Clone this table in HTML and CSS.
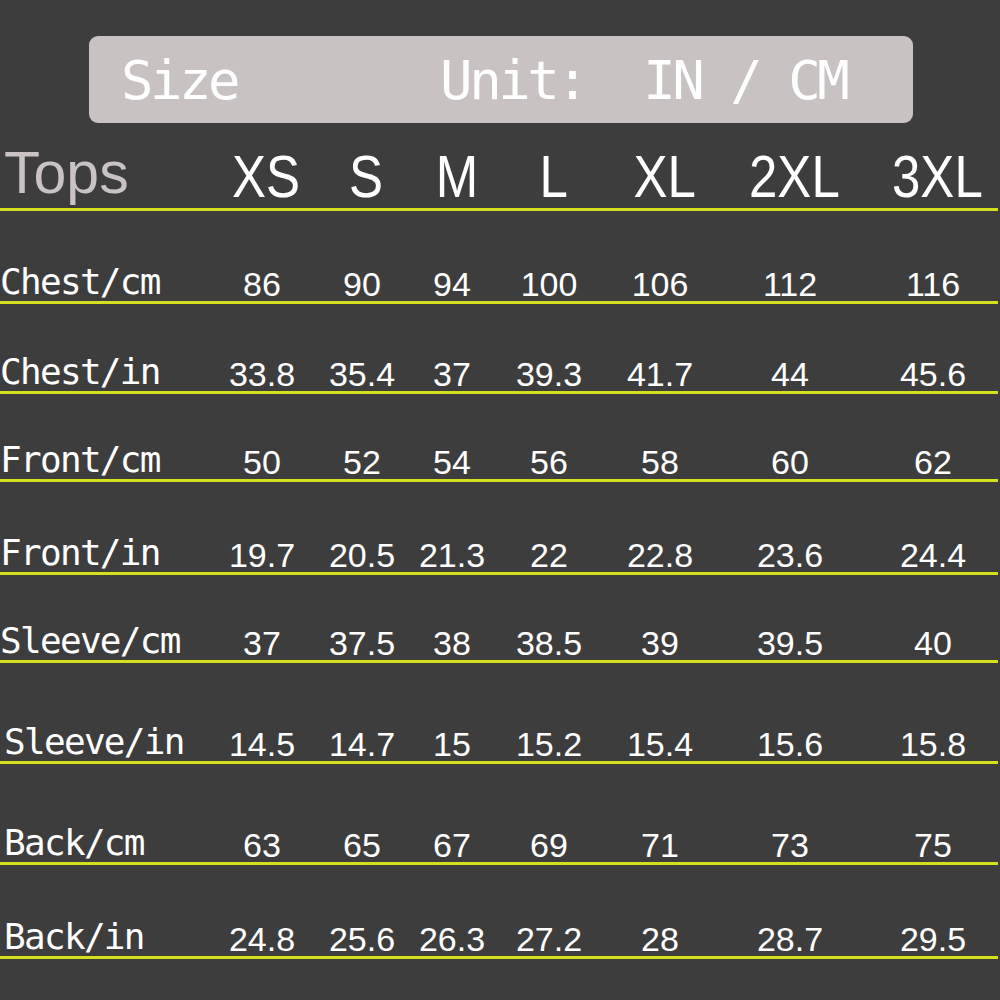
FILE: index.html
```html
<!DOCTYPE html>
<html>
<head>
<meta charset="utf-8">
<title>Size chart</title>
<link rel="stylesheet" href="styles.css">
</head>
<body>
<div class="page">
  <div class="banner"><span class="banner-text">Size       Unit:  IN / CM</span></div>
  <div class="table">
    <div class="row head">
      <div class="tops">Tops</div>
      <div class="size"><span>XS</span></div><div class="size"><span>S</span></div><div class="size"><span>M</span></div><div class="size"><span>L</span></div><div class="size"><span>XL</span></div><div class="size"><span>2XL</span></div><div class="size"><span>3XL</span></div>
    </div>
    <div class="row h93">
      <div class="label">Chest/cm</div>
      <div class="cell">86</div><div class="cell">90</div><div class="cell">94</div><div class="cell">100</div><div class="cell">106</div><div class="cell">112</div><div class="cell">116</div>
    </div>
    <div class="row h90">
      <div class="label">Chest/in</div>
      <div class="cell">33.8</div><div class="cell">35.4</div><div class="cell">37</div><div class="cell">39.3</div><div class="cell">41.7</div><div class="cell">44</div><div class="cell">45.6</div>
    </div>
    <div class="row h88">
      <div class="label">Front/cm</div>
      <div class="cell">50</div><div class="cell">52</div><div class="cell">54</div><div class="cell">56</div><div class="cell">58</div><div class="cell">60</div><div class="cell">62</div>
    </div>
    <div class="row h93">
      <div class="label">Front/in</div>
      <div class="cell">19.7</div><div class="cell">20.5</div><div class="cell">21.3</div><div class="cell">22</div><div class="cell">22.8</div><div class="cell">23.6</div><div class="cell">24.4</div>
    </div>
    <div class="row h88">
      <div class="label">Sleeve/cm</div>
      <div class="cell">37</div><div class="cell">37.5</div><div class="cell">38</div><div class="cell">38.5</div><div class="cell">39</div><div class="cell">39.5</div><div class="cell">40</div>
    </div>
    <div class="row h101">
      <div class="label indent">Sleeve/in</div>
      <div class="cell">14.5</div><div class="cell">14.7</div><div class="cell">15</div><div class="cell">15.2</div><div class="cell">15.4</div><div class="cell">15.6</div><div class="cell">15.8</div>
    </div>
    <div class="row h101">
      <div class="label indent">Back/cm</div>
      <div class="cell">63</div><div class="cell">65</div><div class="cell">67</div><div class="cell">69</div><div class="cell">71</div><div class="cell">73</div><div class="cell">75</div>
    </div>
    <div class="row h94">
      <div class="label indent">Back/in</div>
      <div class="cell">24.8</div><div class="cell">25.6</div><div class="cell">26.3</div><div class="cell">27.2</div><div class="cell">28</div><div class="cell">28.7</div><div class="cell">29.5</div>
    </div>
  </div>
</div>
</body>
</html>
```

FILE: styles.css
```css
html, body {
  margin: 0;
  padding: 0;
  background: #3e3d3e;
}

.page {
  width: 1000px;
  height: 1000px;
  overflow: hidden;
  padding-top: 36px;
  box-sizing: border-box;
  background: #3e3d3e;
}

.banner {
  margin-left: 89px;
  width: 824px;
  height: 87px;
  border-radius: 9px;
  background: #c8c2c2;
  display: flex;
  align-items: center;
  padding-left: 32px;
  padding-top: 3px;
  box-sizing: border-box;
}

.banner-text {
  font-family: "DejaVu Sans Mono", monospace;
  font-size: 54px;
  line-height: 1;
  letter-spacing: -3.5px;
  white-space: pre;
  color: #ffffff;
}

.row {
  display: grid;
  grid-template-columns: 212px 100px 100px 80px 114px 108px 152px 134px;
  width: 998px;
  border-bottom: 3px solid #d4df1f;
  box-sizing: border-box;
  align-items: end;
}

.head { height: 88px; }
.h88 { height: 88px; }
.h90 { height: 90px; }
.h93 { height: 93px; }
.h94 { height: 94px; }
.h101 { height: 101px; }

.tops {
  font-family: "Liberation Sans", Arial, sans-serif;
  font-size: 59px;
  line-height: 1;
  color: #c9c3c3;
  padding-left: 4px;
  padding-bottom: 5px;
}

.size {
  font-family: "Liberation Sans", Arial, sans-serif;
  font-size: 60px;
  line-height: 1;
  text-align: center;
  color: #ffffff;
  padding-left: 9px;
  padding-bottom: 1px;
}

.size span {
  display: inline-block;
  transform: scaleX(0.85);
  transform-origin: center bottom;
}

.label {
  font-family: "DejaVu Sans Mono", monospace;
  font-size: 36px;
  line-height: 1;
  letter-spacing: -1.7px;
  color: #ffffff;
  padding-left: 0;
  padding-bottom: 1px;
}

.label.indent { padding-left: 4px; }

.cell {
  font-family: "Liberation Sans", Arial, sans-serif;
  font-size: 34px;
  line-height: 1;
  text-align: center;
  color: #ffffff;
}
```
